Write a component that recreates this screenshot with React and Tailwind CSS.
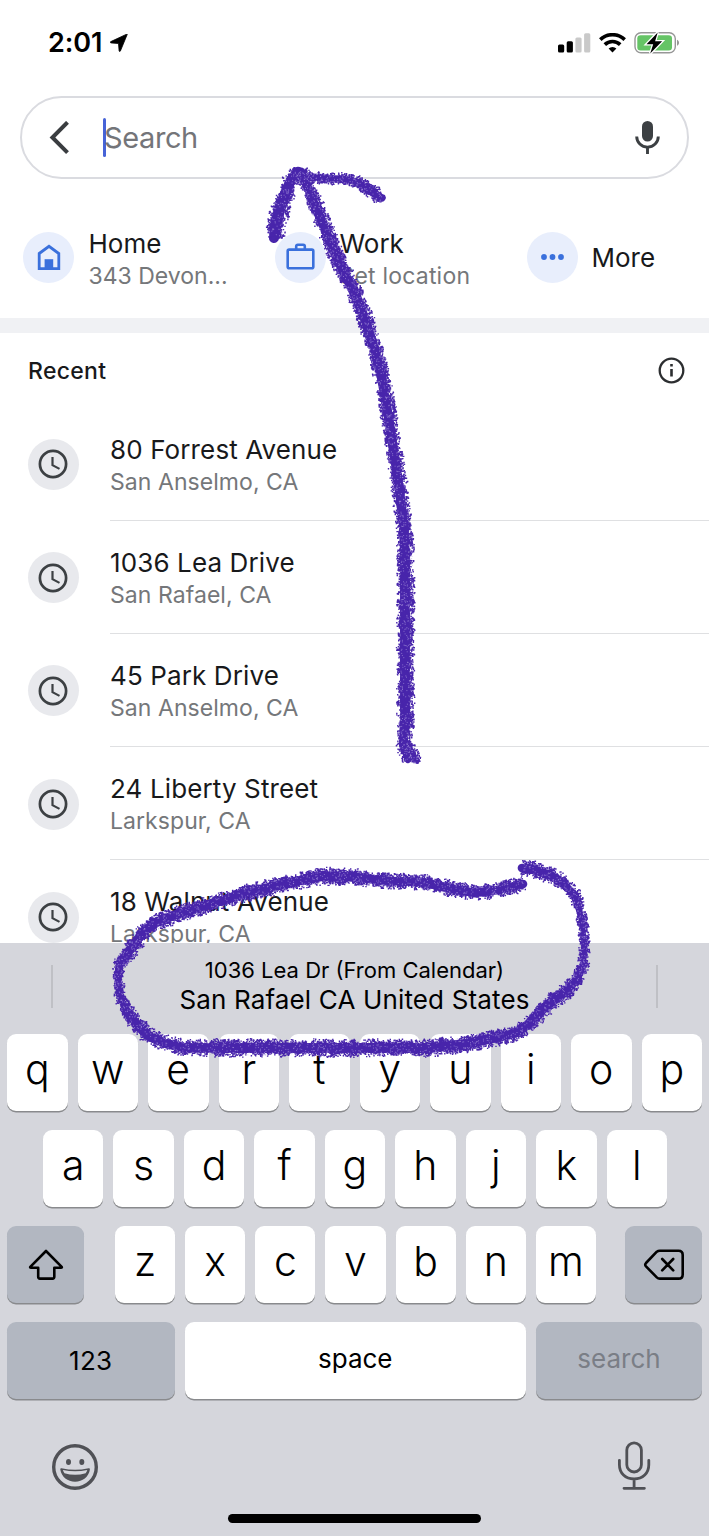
import React from "react";

/* Pen strokes: [x, y, width] samples along each hand-drawn line. */
const STROKES = [
  [[274,238,15],[276,226,17],[279,211,17],[285,194,16],[291,180,15],[298,172,16]],
  [[297,175,14],[302,178,11],[318,178,9],[345,179,9],[357,182,10],[370,191,12],[382,198,11]],
  [[301,172,14],[308,188,12],[314,204,14],[323,224,14],[332,247,14],[343,271,14],[356,296,15],[367,325,14],[375,350,14],[382,380,14],[389,420,14],[395,460,14],[400,495,14],[404,530,14],[405,560,15],[405,600,15],[405,660,15],[405,720,15],[403,745,12],[408,760,9]],
  [[404,743,12],[410,751,12],[417,761,7]],
  [[522,868,13],[535,870,14],[555,877,13],[573,893,11],[579,910,9],[583,927,8],[584,947,8],[583,963,9],[578,978,11],[565,992,14],[545,1007,14],[532,1022,14],[515,1033,13],[495,1038,14],[465,1044,15],[428,1048,15],[388,1048,15],[355,1048,15],[300,1048,15],[233,1048,15],[187,1048,14],[167,1044,13],[150,1037,14],[140,1028,14],[127,1012,12],[119,995,8],[117,973,8],[122,960,12],[133,946,14],[143,932,14],[157,922,14],[180,913,14],[217,902,14],[250,892,15],[293,882,14],[323,876,15],[355,877,14],[388,881,13],[422,882,13],[448,888,14],[475,893,13],[498,890,13],[523,884,13]],
];

function makeRandom(seed) {
  let s = seed;
  return () => {
    s = (s * 1664525 + 1013904223) % 4294967296;
    return s / 4294967296;
  };
}

/* Grain for a crayon texture: clumps of dark specks over the width, pale specks inside. */
function buildGrain() {
  const rnd = makeRandom(7);
  let dark = "";
  let pale = "";
  for (const pts of STROKES) {
    for (let i = 1; i < pts.length; i++) {
      const [x0, y0, w0] = pts[i - 1];
      const [x1, y1, w1] = pts[i];
      const len = Math.hypot(x1 - x0, y1 - y0);
      const nx = -(y1 - y0) / len;
      const ny = (x1 - x0) / len;
      const n = Math.round(len * 3);
      for (let k = 0; k < n; k++) {
        const t = rnd();
        const w = w0 + (w1 - w0) * t;
        const off = (rnd() - 0.5) * w;
        const x = x0 + (x1 - x0) * t + nx * off;
        const y = y0 + (y1 - y0) * t + ny * off;
        for (let j = 0; j < 4; j++) {
          dark += `M${(x + (rnd() - 0.5) * 4).toFixed(1)} ${(y + (rnd() - 0.5) * 4).toFixed(1)}h1.4`;
        }
        if (k % 2 === 0) {
          const o2 = (rnd() - 0.5) * w * 0.95;
          pale += `M${(x0 + (x1 - x0) * t + nx * o2).toFixed(1)} ${(y0 + (y1 - y0) * t + ny * o2).toFixed(1)}h1`;
        }
      }
    }
  }
  return { dark, pale };
}

const GRAIN = buildGrain();

function segments() {
  const out = [];
  STROKES.forEach((pts, s) => {
    for (let i = 1; i < pts.length; i++) {
      const [x0, y0, w0] = pts[i - 1];
      const [x1, y1, w1] = pts[i];
      for (let k = 0; k < 3; k++) {
        const a = k / 3;
        const b = (k + 1) / 3;
        out.push(
          <line
            key={`${s}-${i}-${k}`}
            x1={x0 + (x1 - x0) * a}
            y1={y0 + (y1 - y0) * a}
            x2={x0 + (x1 - x0) * b}
            y2={y0 + (y1 - y0) * b}
            strokeWidth={(w0 + (w1 - w0) * (a + b) / 2) * 0.66}
          />
        );
      }
    }
  });
  return out;
}

function Annotation() {
  return (
    <svg className="pointer-events-none absolute inset-0" width="709" height="1536" viewBox="0 0 709 1536" fill="none">
      <g stroke="#4825ab" strokeLinecap="round">{segments()}</g>
      <path d={GRAIN.dark} stroke="#4825ab" strokeWidth="1.4" />
      <path d={GRAIN.pale} stroke="#b9a9e6" strokeWidth="1" opacity=".55" />
    </svg>
  );
}

function StatusBar() {
  return (
    <div className="flex h-[96px] items-start justify-between pt-[26px] pr-[29px] pl-[48px]">
      <div className="flex h-[33px] items-center gap-[8px]">
        <span className="text-[27px] leading-[33px] font-semibold tracking-[-0.1px]">2:01</span>
        <svg width="18" height="18" viewBox="0 0 18 18"><path d="M17.200.500 10.400 17c-.3.700-1.200.6-1.300-.2L8.500 9.500 1 8.900C.1 8.800 0 7.900.8 7.600L16.600.2c.4-.2.8 0 .6.3z" fill="#000" stroke="#000" strokeWidth=".8" /></svg>
      </div>
      <div className="flex h-[33px] items-center gap-[8px]">
        <svg width="33" height="20" viewBox="0 0 33 20">
          <rect x="0" y="11.500" width="6.200" height="8" rx="1.500" />
          <rect x="8.700" y="8.200" width="6.200" height="11.300" rx="1.500" />
          <rect x="17.400" y="4.400" width="6.200" height="15.100" rx="1.500" fill="#c9c9c9" />
          <rect x="26.100" y=".3" width="6.200" height="19.200" rx="1.500" fill="#c9c9c9" />
        </svg>
        <svg width="27" height="20" viewBox="0 0 27 20" fill="none" stroke="#000" strokeWidth="3.600">
          <path d="M1.300 6.600a17.600 17.600 0 0 1 24.400 0" />
          <path d="M5.800 11.600a11 11 0 0 1 15.400 0" />
          <path d="m13.500 19.400-3.900-3.900a5.500 5.500 0 0 1 7.800 0z" fill="#000" stroke="none" />
        </svg>
        <svg width="46" height="24" viewBox="0 0 46 24">
          <rect x="1" y="1.800" width="40.300" height="20" rx="6" fill="#fff" stroke="#979797" strokeWidth="1.400" />
          <rect x="3.300" y="4.300" width="34.700" height="15.200" rx="3.300" fill="#65c466" />
          <path d="M43 8.800c2.700 1 2.700 5 0 6z" fill="#979797" />
          <path d="M23.700 1.500 12.500 13.300h6.700l-3 9.200 11.900-12.300h-7z" fill="#000" stroke="#fff" strokeWidth="2.600" paintOrder="stroke" />
        </svg>
      </div>
    </div>
  );
}

function SearchBar() {
  return (
    <div className="mr-[20px] ml-[20px] flex h-[83px] items-center rounded-full border-2 border-[#dadbe0] pr-[26px] pl-[27px]">
      <svg width="21" height="34" viewBox="0 0 21 34" fill="none" stroke="#3a3d40" strokeWidth="4"><path d="M18.500 1.300 3.400 16.500l15.100 15.200" /></svg>
      <div className="ml-[33px] h-[39px] w-[3px] rounded-sm bg-[#4763d7]" />
      <span className="-ml-[2px] text-[29px] leading-[37px] tracking-[-0.400px] text-[#747579]">Search</span>
      <svg className="ml-auto" width="26" height="34" viewBox="0 0 26 34">
        <rect x="7" y="0" width="11" height="20.600" rx="5.500" fill="#3c4043" />
        <path d="M1.700 15.400a10.800 10.800 0 0 0 21.600 0M12.500 26.200v6.700" fill="none" stroke="#3c4043" strokeWidth="2.900" />
      </svg>
    </div>
  );
}

function Shortcut({ icon, title, sub }) {
  return (
    <div className="flex h-[64px] w-[252px] shrink-0 items-center gap-[14.500px]">
      <div className="flex size-[51px] shrink-0 items-center justify-center rounded-full bg-[#e8eefc]">{icon}</div>
      <div className={sub ? "pt-[5px] whitespace-nowrap" : "pt-px whitespace-nowrap"}>
        <div className="text-[26px] leading-[32px] text-[#18191b]">{title}</div>
        {sub && <div className="text-[23px] leading-[32px] text-[#75777a]">{sub}</div>}
      </div>
    </div>
  );
}

function Shortcuts() {
  return (
    <div className="flex h-[139px] overflow-hidden pt-[46px] pl-[23px]">
      <Shortcut
        title="Home"
        sub="343 Devon..."
        icon={
          <svg width="26" height="28" viewBox="0 0 26 28" fill="none"><path d="M3.200 10.500 13 3.300l9.800 7.200v15.200H3.200z" stroke="#3a70dc" strokeWidth="2.800" /><path d="M8.600 16.200h8.600v9.500H8.600z" fill="#3a70dc" /></svg>
        }
      />
      <Shortcut
        title={<span className="-ml-px">Work</span>}
        sub={<span className="-ml-px tracking-[0.2px]">Set location</span>}
        icon={
          <svg width="30" height="28" viewBox="0 0 30 28" fill="none" stroke="#3a70dc" strokeWidth="2.600"><rect x="1.700" y="6.600" width="25.600" height="18.700" rx="1.500" /><path d="M10.200 6.500V3.300q0-1.600 1.600-1.600h5.400q1.600 0 1.600 1.600v3.200" /></svg>
        }
      />
      <Shortcut
        title={<span className="-ml-px">More</span>}
        icon={
          <svg width="24" height="6" viewBox="0 0 24 6" fill="#3a70dc"><circle cx="3" cy="3" r="2.900" /><circle cx="11.500" cy="3" r="2.900" /><circle cx="20" cy="3" r="2.900" /></svg>
        }
      />
    </div>
  );
}

function Clock() {
  return (
    <svg width="30" height="30" viewBox="0 0 30 30" fill="none" stroke="#3c4043"><circle cx="15" cy="15" r="13.100" strokeWidth="2.700" /><path d="M14.500 8v8.200l7 3.700" strokeWidth="2.200" /></svg>
  );
}

const RECENT = [
  ["80 Forrest Avenue", "San Anselmo, CA"],
  ["1036 Lea Drive", "San Rafael, CA"],
  ["45 Park Drive", "San Anselmo, CA"],
  ["24 Liberty Street", "Larkspur, CA"],
  ["18 Walnut Avenue", "Larkspur, CA"],
];

function Recent() {
  return (
    <div className="h-[610px] overflow-hidden">
      <div className="flex h-[74.600px] items-center justify-between pr-[24px] pl-[28px]">
        <span className="pt-[2px] text-[23px] leading-[32px] font-medium tracking-[0.300px] text-[#18191b]">Recent</span>
        <svg width="27" height="27" viewBox="0 0 27 27" fill="none" stroke="#2c2e30" strokeWidth="2.300"><circle cx="13.500" cy="13.500" r="11.800" /><path d="M13.500 12v7.500M13.500 7v2.600" strokeWidth="2.600" /></svg>
      </div>
      {RECENT.map(([title, sub]) => (
        <div key={title} className="flex h-[113.200px] shrink-0 pl-[27.500px]">
          <div className="mt-[31.400px] mr-[31.500px] flex size-[51px] shrink-0 items-center justify-center rounded-full bg-[#e8e9ed]"><Clock /></div>
          <div className="flex-1 border-b-[1.500px] border-[#dfe0e2] pt-[26px] whitespace-nowrap">
            <div className="text-[26px] leading-[32px] tracking-[0.120px] text-[#18191b]">{title}</div>
            <div className="text-[23px] leading-[32px] tracking-[0.060px] text-[#75777a]">{sub}</div>
          </div>
        </div>
      ))}
    </div>
  );
}

function Letter({ children }) {
  return (
    <div className="flex h-[77px] min-w-0 flex-1 items-center justify-center rounded-[9px] bg-white pb-[5px] text-[41px] font-[350] shadow-[0_1.500px_0_#898a8d]">
      {children}
    </div>
  );
}

function Keyboard() {
  return (
    <div className="flex h-[593px] flex-col bg-[#d5d6dc] text-black">
      <div className="flex h-[91px] items-start justify-between pr-[51px] pl-[51px]">
        <div className="mt-[22px] h-[43px] w-[2px] bg-[#bfc0c5]" />
        <div className="pt-[12px] text-center whitespace-nowrap">
          <div className="text-[22px] leading-[30px]">1036 Lea Dr (From Calendar)</div>
          <div className="text-[26px] leading-[29px] tracking-[0.150px]">San Rafael CA United States</div>
        </div>
        <div className="mt-[22px] h-[43px] w-[2px] bg-[#bfc0c5]" />
      </div>
      <div className="flex flex-col gap-[19px] pr-[7px] pl-[7px]">
        <div className="flex gap-[10px]">{[..."qwertyuiop"].map((c) => <Letter key={c}>{c}</Letter>)}</div>
        <div className="flex gap-[10px] pr-[35px] pl-[36px]">{[..."asdfghjkl"].map((c) => <Letter key={c}>{c}</Letter>)}</div>
        <div className="flex">
          <div className="flex h-[77px] w-[77px] items-center justify-center rounded-[9px] bg-[#b2b7c1] pt-px shadow-[0_1.500px_0_#898a8d]">
            <svg width="36" height="32" viewBox="0 0 36 32" fill="none" stroke="#000" strokeWidth="2.600" strokeLinejoin="round"><path d="M18 2 2.300 17.800q-.5 1 .7 1h7.200v9q0 1.800 1.800 1.800h12.500q1.800 0 1.800-1.800v-9H33q1.200 0 .7-1z" /></svg>
          </div>
          <div className="mr-[29px] ml-[31px] flex flex-1 gap-[10px]">{[..."zxcvbnm"].map((c) => <Letter key={c}>{c}</Letter>)}</div>
          <div className="flex h-[77px] w-[77px] items-center justify-center rounded-[9px] bg-[#b2b7c1] pt-px shadow-[0_1.500px_0_#898a8d]">
            <svg width="42" height="32" viewBox="0 0 42 32" fill="none" stroke="#000" strokeWidth="2.600" strokeLinejoin="round" strokeLinecap="round"><path d="M13.800 2.700Q15.100 1.700 16.800 1.700H35.500q4.200 0 4.200 4.200v19.500q0 4.200-4.200 4.200H16.800q-1.700 0-3-1.200L3 17.400q-1.500-1.700 0-3.400zM19.200 10l11 11.400M30.200 10l-11 11.400" /></svg>
          </div>
        </div>
        <div className="flex gap-[10.500px] text-[26px]">
          <div className="flex h-[77px] w-[167.500px] items-center justify-center rounded-[9px] bg-[#b2b7c1] tracking-[0.300px] shadow-[0_1.500px_0_#898a8d]">123</div>
          <div className="flex h-[77px] flex-1 items-center justify-center rounded-[9px] bg-white pb-[4px] shadow-[0_1.500px_0_#898a8d]">space</div>
          <div className="flex h-[77px] w-[166px] items-center justify-center rounded-[9px] bg-[#b2b7c1] pb-[4px] text-[#7a7e86] shadow-[0_1.500px_0_#898a8d]">search</div>
        </div>
      </div>
      <div className="mt-[41.500px] flex h-[50px] items-center justify-between pr-[58px] pl-[51px]">
        <svg width="48" height="48" viewBox="0 0 48 48" fill="none"><circle cx="24" cy="25" r="21.300" stroke="#505156" strokeWidth="3.400" /><ellipse cx="17.500" cy="20" rx="2.500" ry="3" fill="#505156" /><ellipse cx="30.800" cy="20" rx="2.500" ry="3" fill="#505156" /><path d="M10.600 26.200q13.400 3 27 0 1.500-.2 1.300 1.300C37.700 35 31.500 39.700 24.100 39.700S10.500 35 9.300 27.500q-.2-1.500 1.300-1.300z" fill="#505156" /><path d="M11.900 28q12.200 2.600 24.400 0-.3 1.500-1.600 3.200-10.600 3-21.200 0-1.300-1.700-1.600-3.200z" fill="#d5d6dc" /></svg>
        <svg width="34" height="50" viewBox="0 0 34 50" fill="none" stroke="#505156" strokeWidth="2.800" strokeLinecap="round"><rect x="9.800" y="1.800" width="14.600" height="29.200" rx="7.300" /><path d="M2.400 19.300v4.500c0 8.500 6 14.200 14.700 14.200s14.700-5.700 14.700-14.200v-4.500M17.100 38v9M7 47.300h20.400" /></svg>
      </div>
      <div className="mt-[23.500px] ml-[228px] h-[9px] w-[253px] rounded-full bg-black" />
    </div>
  );
}

export default function App() {
  return (
    <div className="relative h-[1536px] w-[709px] overflow-hidden bg-white font-['Inter','Liberation_Sans',sans-serif] text-black">
      <StatusBar />
      <SearchBar />
      <Shortcuts />
      <div className="h-[15px] bg-[#f0f1f4]" />
      <Recent />
      <Keyboard />
      <Annotation />
    </div>
  );
}
